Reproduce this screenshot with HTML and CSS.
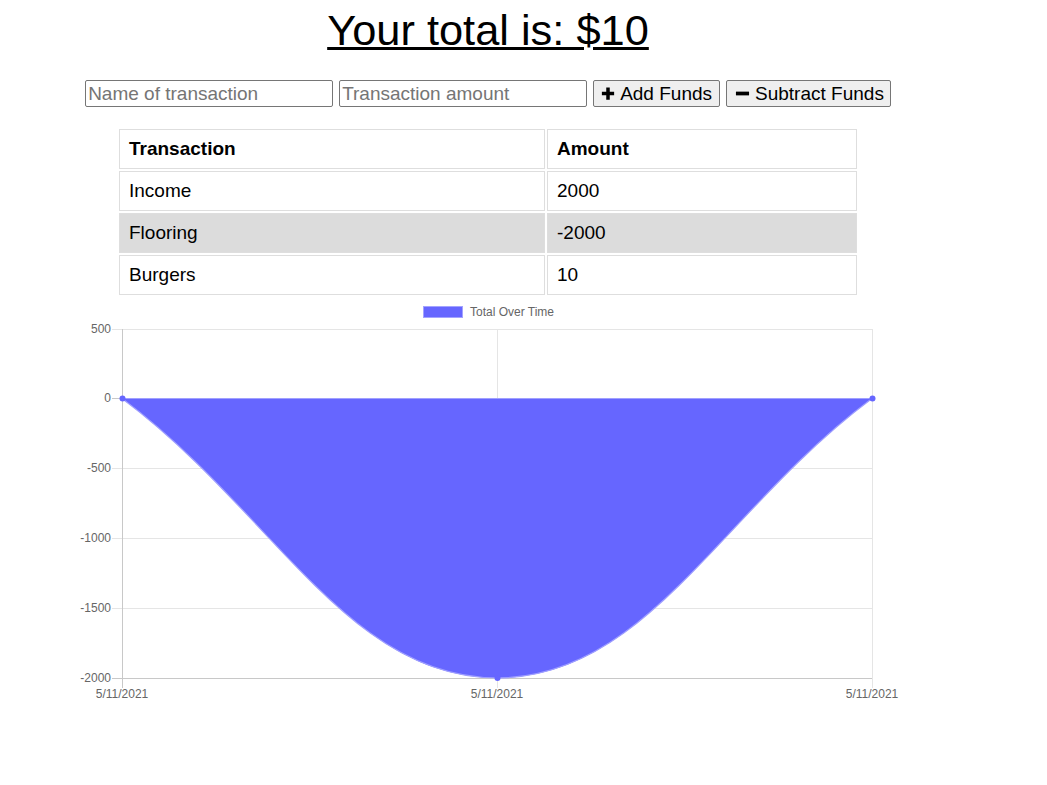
FILE: index.html
```html
<!DOCTYPE html>
<html lang="en">
<head>
<meta charset="utf-8">
<title>Budget Tracker</title>
<link rel="stylesheet" href="styles.css">
</head>
<body>
<div class="wrapper">
  <h1 class="total">Your total is: $10</h1>
  <div class="form">
    <input class="field" type="text" placeholder="Name of transaction">
    <input class="field" type="number" placeholder="Transaction amount">
    <button class="btn" type="button"><svg class="ico" viewBox="0 0 16 16" width="14" height="15"><path d="M6 1h4v5h5v4h-5v5H6v-5H1V6h5z" fill="#000"/></svg>Add Funds</button>
    <button class="btn btn-sub" type="button"><svg class="ico" viewBox="0 0 16 16" width="15" height="15"><path d="M1 6h14v4H1z" fill="#000"/></svg>Subtract Funds</button>
  </div>
  <table class="tx">
    <thead>
      <tr><th class="c1">Transaction</th><th>Amount</th></tr>
    </thead>
    <tbody>
      <tr><td>Income</td><td>2000</td></tr>
      <tr class="alt"><td>Flooring</td><td>-2000</td></tr>
      <tr><td>Burgers</td><td>10</td></tr>
    </tbody>
  </table>
  <svg class="chart" width="816" height="408" viewBox="0 0 816 408">
    <g class="legend">
      <rect x="343.5" y="6.5" width="39" height="11" fill="#6666ff" stroke="#a3a3ff" stroke-width="1"/>
      <text x="390" y="16" class="lbl">Total Over Time</text>
    </g>
    <g stroke="#e5e5e5" stroke-width="1">
      <line x1="32" y1="29.5" x2="792" y2="29.5"/>
      <line x1="32" y1="168.5" x2="792" y2="168.5"/>
      <line x1="32" y1="238.5" x2="792" y2="238.5"/>
      <line x1="32" y1="308.5" x2="792" y2="308.5"/>
      <line x1="417.5" y1="29" x2="417.5" y2="388"/>
      <line x1="792.5" y1="29" x2="792.5" y2="388"/>
    </g>
    <g stroke="#c8c8c8" stroke-width="1">
      <line x1="32" y1="98.5" x2="792" y2="98.5"/>
      <line x1="42.5" y1="29" x2="42.5" y2="388"/>
      <line x1="32" y1="378.5" x2="792" y2="378.5"/>
    </g>
    <path d="M42,98.5 C192,210 267,378 417,378 C567,378 642,210 792,98.5 Z" fill="#6666ff" stroke="#9f9fff" stroke-width="1.2"/>
    <g fill="#6666ff">
      <circle cx="42.5" cy="98.5" r="3"/>
      <circle cx="417.5" cy="378" r="3"/>
      <circle cx="792.5" cy="98.5" r="3"/>
    </g>
    <g class="lbl" text-anchor="end">
      <text x="31" y="33">500</text>
      <text x="31" y="102">0</text>
      <text x="31" y="172">-500</text>
      <text x="31" y="242">-1000</text>
      <text x="31" y="312">-1500</text>
      <text x="31" y="382">-2000</text>
    </g>
    <g class="lbl" text-anchor="middle">
      <text x="42" y="398">5/11/2021</text>
      <text x="417" y="398">5/11/2021</text>
      <text x="792" y="398">5/11/2021</text>
    </g>
  </svg>
</div>
</body>
</html>
```
FILE: styles.css
```css
body {
  margin: 7px 8px 8px;
  font-family: "Liberation Sans", Arial, sans-serif;
  color: #000;
  background: #fff;
}

.wrapper {
  width: 960px;
  text-align: center;
}

.total {
  margin: 0 0 26px;
  font-size: 43.4px;
  font-weight: normal;
  line-height: 47px;
  text-decoration: underline;
  text-decoration-thickness: 3px;
  text-underline-offset: 2px;
  text-decoration-skip-ink: auto;
}

.form {
  display: flex;
  justify-content: center;
  gap: 6px;
}

.field {
  box-sizing: border-box;
  width: 248px;
  height: 27px;
  margin: 0;
  padding: 1px 2px;
  border: 1px solid #767676;
  border-radius: 2px;
  font-family: "Liberation Sans", Arial, sans-serif;
  font-size: 19px;
  color: #000;
  background: #fff;
}

.field::placeholder {
  color: #757575;
}

.btn {
  box-sizing: border-box;
  display: flex;
  align-items: center;
  gap: 5px;
  height: 27px;
  margin: 0;
  padding: 0 7px;
  border: 1px solid #767676;
  border-radius: 2px;
  background: #efefef;
  font-family: "Liberation Sans", Arial, sans-serif;
  font-size: 19px;
  color: #000;
}

.btn-sub {
  padding: 0 6px 0 8px;
}

.ico {
  display: block;
  flex: none;
}

.tx {
  width: 742px;
  margin: 20px auto 0;
  border-spacing: 2px;
  text-align: left;
  font-size: 19px;
}

.tx th,
.tx td {
  height: 22px;
  padding: 8px 9px;
  border: 1px solid #dedede;
  line-height: 22px;
}

.tx th {
  font-weight: bold;
}

.tx .c1 {
  width: 406px;
}

.tx .alt td {
  background: #dcdcdc;
}

.chart {
  display: block;
  margin: 3px auto 0;
  overflow: visible;
}

.lbl {
  font-family: "Liberation Sans", Arial, sans-serif;
  font-size: 12px;
  fill: #666;
}
```
